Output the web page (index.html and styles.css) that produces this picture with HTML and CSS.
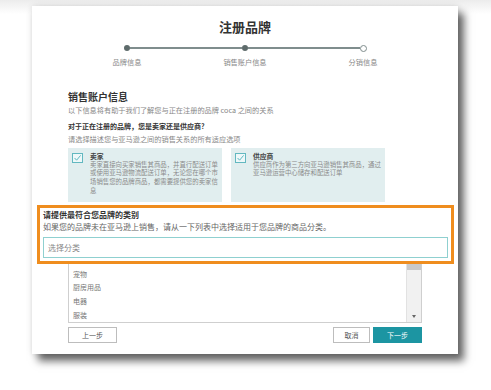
FILE: index.html
```html
<!DOCTYPE html>
<html lang="zh-CN">
<head>
<meta charset="utf-8">
<title>注册品牌</title>
<link rel="stylesheet" href="styles.css">
</head>
<body>
<div class="card">
  <h1 class="title">注册品牌</h1>
  <div class="stepper">
    <div class="step first">
      <div class="track"><span class="seg"></span><span class="dot"></span><span class="seg"></span></div>
      <div class="label">品牌信息</div>
    </div>
    <div class="step">
      <div class="track"><span class="seg"></span><span class="dot"></span><span class="seg"></span></div>
      <div class="label">销售账户信息</div>
    </div>
    <div class="step last hollow">
      <div class="track"><span class="seg"></span><span class="dot"></span><span class="seg"></span></div>
      <div class="label">分销信息</div>
    </div>
  </div>

  <h2 class="heading">销售账户信息</h2>
  <p class="sub">以下信息将有助于我们了解您与正在注册的品牌 coca 之间的关系</p>
  <p class="question">对于正在注册的品牌，您是卖家还是供应商?</p>
  <p class="hint">请选择描述您与亚马逊之间的销售关系的所有适应选项</p>

  <div class="options">
    <div class="option">
      <svg class="check" width="11" height="10" viewBox="0 0 11 10"><rect x="0.5" y="0.5" width="10" height="9" fill="#eef8f9" stroke="#62b8c0"/><polyline points="2.6,5 4.6,7.2 8.6,2.4" fill="none" stroke="#4eb0ba" stroke-width="0.9"/></svg>
      <div class="opt-text">
        <div class="opt-title">卖家</div>
        <div class="opt-desc">卖家直接向买家销售其商品，并直行配送订单或使用亚马逊物流配送订单，无论您在哪个市场销售您的品牌商品，都需要提供您的卖家信息</div>
      </div>
    </div>
    <div class="option">
      <svg class="check" width="11" height="10" viewBox="0 0 11 10"><rect x="0.5" y="0.5" width="10" height="9" fill="#eef8f9" stroke="#62b8c0"/><polyline points="2.6,5 4.6,7.2 8.6,2.4" fill="none" stroke="#4eb0ba" stroke-width="0.9"/></svg>
      <div class="opt-text">
        <div class="opt-title">供应商</div>
        <div class="opt-desc">供应商作为第三方向亚马逊销售其商品，通过亚马逊运营中心储存和配送订单</div>
      </div>
    </div>
  </div>

  <div class="highlight">
    <div class="hl-title">请提供最符合您品牌的类别</div>
    <div class="hl-desc">如果您的品牌未在亚马逊上销售，请从一下列表中选择适用于您品牌的商品分类。</div>
    <div class="hl-input">选择分类</div>
  </div>

  <div class="list">
    <ul class="items">
      <li>宠物</li>
      <li>厨房用品</li>
      <li>电器</li>
      <li>服装</li>
    </ul>
    <div class="scrollbar">
      <span class="thumb"></span>
      <span class="arrow"></span>
    </div>
  </div>

  <div class="actions">
    <button class="btn prev">上一步</button>
    <button class="btn cancel">取消</button>
    <button class="btn next">下一步</button>
  </div>
</div>
</body>
</html>
```

FILE: styles.css
```css
html, body {
  margin: 0;
  background: #ffffff;
}
body {
  padding: 6px 0 0 32px;
  font-family: "Noto Sans CJK SC", "Noto Sans", sans-serif;
  background: linear-gradient(#ececec, #ffffff 14px);
  height: 390px;
  box-sizing: border-box;
}
.card {
  width: 426px;
  height: 348px;
  box-sizing: border-box;
  padding: 12px 36px 10px;
  background: #fff;
  display: flex;
  flex-direction: column;
  box-shadow: 0 0 6px rgba(0, 0, 0, 0.12), 6px 7px 8px rgba(0, 0, 0, 0.6);
}
.title {
  margin: 0;
  font-size: 13px;
  line-height: 18px;
  font-weight: 700;
  color: #333;
  text-align: center;
}
.stepper {
  display: grid;
  grid-template-columns: repeat(3, 1fr);
  margin-top: 7px;
}
.track {
  display: flex;
  align-items: center;
  height: 10px;
}
.seg {
  flex: 1;
  height: 1.5px;
  background: #7f8d8d;
}
.first .seg:first-child,
.last .seg:last-child {
  background: transparent;
}
.dot {
  width: 6px;
  height: 6px;
  border-radius: 50%;
  background: #5e6b6b;
}
.hollow .dot {
  width: 7px;
  height: 7px;
  box-sizing: border-box;
  border: 1px solid #7f8d8d;
  background: #fff;
}
.label {
  margin-top: 4px;
  font-size: 7.2px;
  line-height: 10px;
  color: #888;
  text-align: center;
}
.heading {
  margin: 23px 0 0;
  font-size: 10px;
  line-height: 14px;
  font-weight: 700;
  color: #333;
}
.sub, .hint {
  margin: 1px 0 0;
  font-size: 7.2px;
  line-height: 11px;
  color: #888;
}
.question {
  margin: 4.5px 0 0;
  font-size: 7px;
  line-height: 11px;
  font-weight: 700;
  color: #333;
}
.hint {
  margin-top: 2px;
}
.options {
  display: grid;
  grid-template-columns: 154px 154px;
  column-gap: 9px;
  margin-top: 3.5px;
  height: 54px;
}
.option {
  display: flex;
  gap: 7px;
  padding: 3.5px 3px 0 4px;
  background: #e1eeef;
}
.check {
  flex: none;
  margin-top: 1.5px;
}
.opt-title {
  font-size: 6.8px;
  line-height: 9px;
  font-weight: 700;
  color: #444;
}
.opt-desc {
  font-size: 6.4px;
  line-height: 8.9px;
  color: #8a8a8a;
}
.highlight {
  margin: 3px -32px 0 -31px;
  border: 3px solid #ef8d1e;
  background: #fff;
  padding: 1px 3px 3px;
}
.hl-title {
  font-size: 8px;
  line-height: 12px;
  font-weight: 700;
  color: #333;
}
.hl-desc {
  font-size: 8px;
  line-height: 12px;
  color: #666;
}
.hl-input {
  margin-top: 4px;
  height: 21px;
  box-sizing: border-box;
  border: 1px solid #8fd0d0;
  padding: 0 4px;
  display: flex;
  align-items: center;
  font-size: 8px;
  color: #888;
}
.list {
  display: flex;
  height: 59px;
  box-sizing: border-box;
  border: 1px solid #cfcfcf;
  border-top: none;
}
.items {
  flex: 1;
  list-style: none;
  margin: 0;
  padding: 3.5px 0 0 4px;
}
.items li {
  font-size: 7px;
  line-height: 13.7px;
  color: #777;
}
.scrollbar {
  width: 14px;
  background: #f1f1f1;
  border-left: 1px solid #e2e2e2;
  display: flex;
  flex-direction: column;
  justify-content: space-between;
  align-items: center;
}
.thumb {
  align-self: stretch;
  height: 6px;
  background: #c9c9c9;
}
.arrow {
  width: 0;
  height: 0;
  border-left: 2.5px solid transparent;
  border-right: 2.5px solid transparent;
  border-top: 3px solid #666;
  margin-bottom: 4px;
}
.actions {
  display: flex;
  gap: 3px;
  margin-top: 4px;
}
.btn {
  height: 16px;
  padding: 0;
  box-sizing: border-box;
  border: 1px solid #bdbdbd;
  background: #fff;
  color: #555;
  font-family: inherit;
  font-size: 7px;
  display: flex;
  align-items: center;
  justify-content: center;
}
.prev {
  width: 49px;
  margin-right: auto;
}
.cancel {
  width: 37px;
}
.next {
  width: 49px;
  background: #1c95a2;
  border-color: #1c95a2;
  color: #fff;
}
```
